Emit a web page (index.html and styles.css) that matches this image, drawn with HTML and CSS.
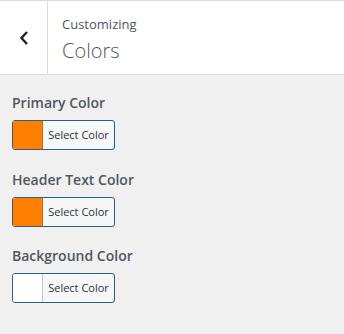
FILE: index.html
```html
<!DOCTYPE html>
<html lang="en">
<head>
<meta charset="UTF-8">
<title>Customizing Colors</title>
<link rel="stylesheet" href="styles.css">
</head>
<body>
<div class="panel">
    <div class="head">
        <div class="back">
            <svg width="12" height="16" viewBox="0 0 12 16"><path d="M9 2 L3.5 8 L9 14" fill="none" stroke="#1d2327" stroke-width="2.4"/></svg>
        </div>
        <div class="title">
            <span class="sub">Customizing</span>
            <span class="name">Colors</span>
        </div>
    </div>
    <div class="list">
        <div class="item">
            <p class="label">Primary Color</p>
            <button class="pick"><span class="swatch orange"></span><span class="txt">Select Color</span></button>
        </div>
        <div class="item">
            <p class="label">Header Text Color</p>
            <button class="pick"><span class="swatch orange"></span><span class="txt">Select Color</span></button>
        </div>
        <div class="item">
            <p class="label">Background Color</p>
            <button class="pick"><span class="swatch"></span><span class="txt">Select Color</span></button>
        </div>
    </div>
</div>
</body>
</html>
```
FILE: styles.css
```css
*{margin: 0; padding: 0; box-sizing: border-box;}
body{
    background: #f0f0f1;
    font-family: "Open Sans", "Noto Sans", sans-serif;
    color: #50575e;
}
.head{
    display: flex;
    height: 75px;
    background: #fff;
    border-top: 1px solid #dcdcde;
    border-bottom: 1px solid #dcdcde;
}
.back{
    width: 48px;
    border-right: 1px solid #dcdcde;
    display: flex;
    align-items: center;
    justify-content: center;
}
.title{
    display: flex;
    flex-direction: column;
    padding: 14px 0 0 14px;
}
.sub{
    font-size: 13px;
    line-height: 18px;
}
.name{
    font-size: 20px;
    font-weight: 300;
    line-height: 28px;
    margin-top: 4px;
}
.list{
    padding: 18px 12px 0;
}
.item{
    margin-bottom: 19.5px;
}
.label{
    font-size: 14px;
    font-weight: 600;
    line-height: 20px;
    margin-bottom: 7px;
}
.pick{
    display: flex;
    width: 103px;
    height: 30px;
    border: 1px solid #2c5d87;
    border-radius: 3px;
    background: #f6f7f7;
    overflow: hidden;
    font-family: inherit;
    cursor: pointer;
}
.swatch{
    width: 30px;
    height: 100%;
    background: #fff;
    border-right: 1px solid #c3c4c7;
}
.swatch.orange{
    background: #ff7f00;
    border-right-color: #d06a00;
}
.txt{
    flex: 1;
    font-size: 11px;
    color: #2c3338;
    line-height: 28px;
    text-align: center;
}
```
